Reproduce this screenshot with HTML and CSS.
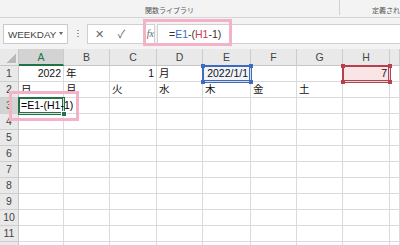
FILE: index.html
```html
<!doctype html>
<html>
<head>
<meta charset="utf-8">
<title>WEEKDAY</title>
<link rel="stylesheet" href="styles.css">
</head>
<body>
<div class="app">
    <div class="ribbon">
        <div class="group group-fn"><span>関数ライブラリ</span></div>
        <div class="group group-names"><span>定義され</span></div>
    </div>

    <div class="formula-bar">
        <div class="name-box"><span>WEEKDAY</span><i class="caret"></i></div>
        <div class="grip"></div>
        <div class="fx-buttons">
            <span class="btn">✕</span>
            <span class="btn">✓</span>
            <span class="btn fx">fx</span>
        </div>
        <div class="formula-input">=<span class="ref-blue">E1</span>-(<span class="ref-red">H1</span>-1)</div>
    </div>

    <div class="sheet">
        <div class="corner"></div><div class="ch sel">A</div><div class="ch">B</div><div class="ch">C</div><div class="ch">D</div><div class="ch">E</div><div class="ch">F</div><div class="ch">G</div><div class="ch">H</div><div class="ch"></div>

        <div class="rh">1</div><div class="c num">2022</div><div class="c">年</div><div class="c num">1</div><div class="c">月</div>
        <div class="c num ref ref-e"><span>2022/1/1</span><i class="h tl"></i><i class="h tr"></i><i class="h bl"></i><i class="h br"></i></div>
        <div class="c"></div><div class="c"></div>
        <div class="c num ref ref-h"><span>7</span><i class="h tl"></i><i class="h tr"></i><i class="h bl"></i><i class="h br"></i></div>
        <div class="c"></div>

        <div class="rh">2</div><div class="c">日</div><div class="c">月</div><div class="c">火</div><div class="c">水</div><div class="c">木</div><div class="c">金</div><div class="c">土</div><div class="c"></div><div class="c"></div>

        <div class="rh sel">3</div><div class="c active">=E1-(H1-1)<i class="fill"></i></div><div class="c"></div><div class="c"></div><div class="c"></div><div class="c"></div><div class="c"></div><div class="c"></div><div class="c"></div><div class="c"></div>

        <div class="rh">4</div><div class="c"></div><div class="c"></div><div class="c"></div><div class="c"></div><div class="c"></div><div class="c"></div><div class="c"></div><div class="c"></div><div class="c"></div>
        <div class="rh">5</div><div class="c"></div><div class="c"></div><div class="c"></div><div class="c"></div><div class="c"></div><div class="c"></div><div class="c"></div><div class="c"></div><div class="c"></div>
        <div class="rh">6</div><div class="c"></div><div class="c"></div><div class="c"></div><div class="c"></div><div class="c"></div><div class="c"></div><div class="c"></div><div class="c"></div><div class="c"></div>
        <div class="rh">7</div><div class="c"></div><div class="c"></div><div class="c"></div><div class="c"></div><div class="c"></div><div class="c"></div><div class="c"></div><div class="c"></div><div class="c"></div>
        <div class="rh">8</div><div class="c"></div><div class="c"></div><div class="c"></div><div class="c"></div><div class="c"></div><div class="c"></div><div class="c"></div><div class="c"></div><div class="c"></div>
        <div class="rh">9</div><div class="c"></div><div class="c"></div><div class="c"></div><div class="c"></div><div class="c"></div><div class="c"></div><div class="c"></div><div class="c"></div><div class="c"></div>
        <div class="rh">10</div><div class="c"></div><div class="c"></div><div class="c"></div><div class="c"></div><div class="c"></div><div class="c"></div><div class="c"></div><div class="c"></div><div class="c"></div>
        <div class="rh">11</div><div class="c"></div><div class="c"></div><div class="c"></div><div class="c"></div><div class="c"></div><div class="c"></div><div class="c"></div><div class="c"></div><div class="c"></div>
        <div class="rh"></div><div class="c"></div><div class="c"></div><div class="c"></div><div class="c"></div><div class="c"></div><div class="c"></div><div class="c"></div><div class="c"></div><div class="c"></div>
    </div>

    <!-- ピンクの強調枠 -->
    <div class="mark mark-formula"></div>
    <div class="mark mark-cell"></div>
</div>
</body>
</html>
```

FILE: styles.css
```css
body{
	margin:0;
	width:400px;
	height:245px;
	overflow:hidden;
	background:#fff;
	font-family:"Liberation Sans","Noto Sans CJK JP",sans-serif;
}
.app{position:relative; width:400px; height:245px; overflow:hidden;}

/* リボン */
.ribbon{
	display:flex;
	align-items:flex-start;
	height:18px;
	background:#f3f3f3;
	border-bottom:1px solid #d6d6d6;
	box-sizing:border-box;
	font-size:7px;
	color:#555;
}
.group{
	display:flex;
	align-items:flex-end;
	height:15px;
	box-sizing:border-box;
	line-height:8px;
	white-space:nowrap;
}
.group-fn{width:342px; justify-content:center; border-right:1px solid #d2d2d2;}
.group-names{padding-left:32px;}

/* 数式バー */
.formula-bar{
	display:flex;
	align-items:flex-start;
	height:31px;
	padding-top:6px;
	box-sizing:border-box;
	background:#f3f3f3;
}
.name-box{
	display:flex;
	align-items:center;
	justify-content:space-between;
	width:65px;
	height:20px;
	margin-left:3px;
	padding:0 4px 0 4px;
	box-sizing:border-box;
	background:#fff;
	border:1px solid #c9c9c9;
	font-size:9.8px;
	color:#444;
}
.caret{
	width:0; height:0;
	margin-bottom:2px;
	border-left:2.5px solid transparent;
	border-right:2.5px solid transparent;
	border-top:3px solid #666;
}
.grip{
	width:2px;
	height:10px;
	margin:5px 0 0 9px;
	background:radial-gradient(circle,#9a9a9a 0.8px,transparent 1.1px) 0 0/2px 3px;
}
.fx-buttons{
	display:flex;
	align-items:center;
	width:68px;
	height:20px;
	margin-left:8px;
	padding-left:1px;
	box-sizing:border-box;
	background:#fff;
	border:1px solid #d0d0d0;
	color:#666;
	font-size:11px;
}
.btn{width:22px; text-align:center; line-height:18px;}
.fx{font-family:"Liberation Serif",serif; font-style:italic; font-size:10px; text-align:right;}
.formula-input{
	flex:1;
	height:20px;
	margin-left:2px;
	padding-left:11px;
	box-sizing:border-box;
	background:#fff;
	border:1px solid #d0d0d0;
	border-right:none;
	font-size:10.5px;
	line-height:18px;
	color:#333;
}
.ref-blue{color:#3e6bc0;}
.ref-red{color:#c0414f;}

/* シート */
.sheet{
	display:grid;
	grid-template-columns:19px 45px 46px 47px 46px 48px 46px 46px 47px 10px;
	grid-template-rows:17px;
	grid-auto-rows:16px;
	font-size:10.5px;
}
.sheet > div{
	position:relative;
	box-sizing:border-box;
	border-right:1px solid #dadada;
	border-bottom:1px solid #dadada;
	line-height:15px;
	white-space:nowrap;
}
.corner{
	background:#e9e9e9 linear-gradient(to bottom right,transparent 50%,#b9b9b9 50%) no-repeat right 2px bottom 2px/9px 9px;
	border-bottom-color:#c6c6c6 !important;
	border-right-color:#c6c6c6 !important;
}
.ch{
	background:#e9e9e9;
	text-align:center;
	color:#444;
	line-height:16px !important;
	border-right-color:#cbcbcb !important;
	border-bottom-color:#c6c6c6 !important;
}
.ch.sel{background:#d3d3d3; color:#217346; border-bottom:2px solid #217346 !important;}
.rh{
	background:#e9e9e9;
	text-align:center;
	color:#444;
	border-right-color:#c6c6c6 !important;
	border-bottom-color:#cfcfcf !important;
}
.rh.sel{background:#d3d3d3; color:#217346;}
.c{padding:0 2px; color:#111;}
.num{text-align:right;}

/* 参照セルの枠 */
.ref{z-index:1;}
.ref-e{background:#f1f5fb; box-shadow:0 0 0 1px #3e6bc0, inset 0 0 0 1px #3e6bc0;}
.ref-h{background:#f9e4e6; box-shadow:0 0 0 1px #b8404d, inset 0 0 0 1px #b8404d;}
.h{position:absolute; width:4px; height:4px;}
.ref-e .h{background:#3e6bc0;}
.ref-h .h{background:#b8404d;}
.tl{left:-2px; top:-2px;}
.tr{right:-3px; top:-2px;}
.bl{left:-2px; bottom:-3px;}
.br{right:-3px; bottom:-3px;}

.active{
	z-index:2;
	overflow:visible;
	box-shadow:0 0 0 1px #217346, inset 0 0 0 1px #217346;
	color:#000;
}
.fill{
	position:absolute;
	right:-4px;
	bottom:-4px;
	width:4px;
	height:4px;
	background:#217346;
	border:1px solid #fff;
}

.mark{
	position:absolute;
	box-sizing:border-box;
	border:3px solid #f4b2c8;
	z-index:5;
}
.mark-formula{left:143px; top:19px; width:89px; height:27px;}
.mark-cell{left:9px; top:91px; width:70px; height:30px;}
```
